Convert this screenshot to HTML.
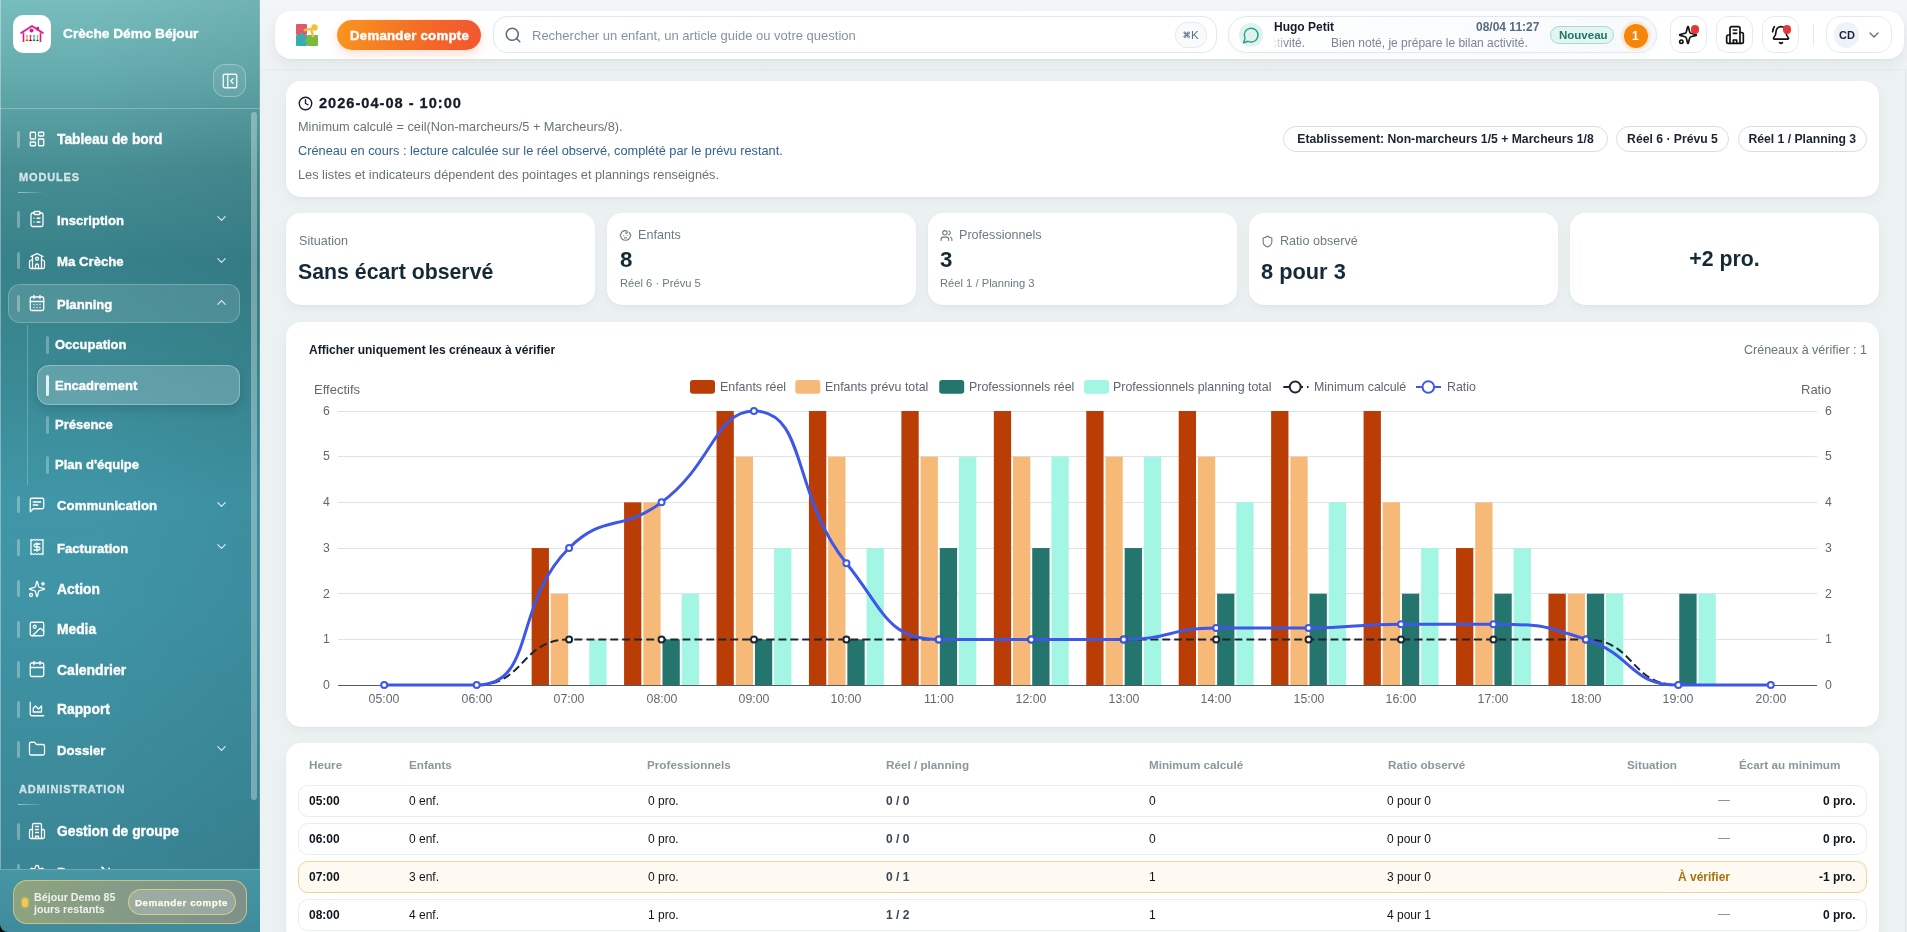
<!DOCTYPE html><html><head><meta charset="utf-8"><style>
html,body{margin:0;padding:0;width:1907px;height:932px;overflow:hidden;position:relative;font-family:"Liberation Sans",sans-serif;}
.t{position:absolute;white-space:nowrap;line-height:1;will-change:transform;}
</style></head><body>
<div style="position:absolute;left:260px;top:0px;width:1647px;height:932px;background:#ecf1f2;"></div>
<div style="position:absolute;left:260px;top:0px;width:1647px;height:70px;background:linear-gradient(#f3f6f7,#eef2f3);"></div>
<div style="position:absolute;left:260px;top:69px;width:1647px;height:2px;background:linear-gradient(rgba(0,0,0,0.035),rgba(0,0,0,0));"></div>
<div style="position:absolute;left:1905px;top:70px;width:1px;height:862px;background:#dfe4e6;"></div>
<div style="position:absolute;left:0px;top:0px;width:260px;height:932px;background:linear-gradient(90deg,rgba(0,20,30,0) 35%,rgba(0,20,30,0.06) 100%),linear-gradient(180deg,#78bdbd 0px,#66adaf 70px,#468d92 170px,#37818a 260px,#38868f 340px,#3c8e9b 420px,#4096a7 500px,#3f94a6 600px,#3d8f9f 710px,#3a8696 860px);"></div>
<div style="position:absolute;left:0px;top:0px;width:1px;height:932px;background:rgba(255,255,255,0.35);"></div>
<div style="position:absolute;left:259px;top:0px;width:1px;height:932px;background:rgba(255,255,255,0.12);"></div>
<div style="position:absolute;left:13px;top:15px;width:38px;height:38px;background:#fff;border-radius:10px;"></div>
<svg style="position:absolute;left:19px;top:24px" width="26" height="20" viewBox="0 0 26 20">
<path d="M2 9 L13 2 L24 9" fill="none" stroke="#e4148c" stroke-width="1.6" stroke-linecap="round"/>
<rect x="17.5" y="3" width="2.5" height="3.5" fill="#e4148c"/>
<circle cx="12.5" cy="6.5" r="2" fill="#e4148c"/>
<path d="M4.5 8.5 V18 M21.5 8.5 V18" stroke="#e4148c" stroke-width="1.6"/>
<circle cx="8" cy="12" r="1" fill="#f7941d"/><path d="M8 13 v3 M6.8 17 L8 15 L9.2 17" stroke="#f7941d" stroke-width="1"/>
<circle cx="11.5" cy="12" r="1" fill="#ec1c7c"/><path d="M11.5 13 v3 M10.3 17 L11.5 15 L12.7 17" stroke="#ec1c7c" stroke-width="1"/>
<circle cx="15" cy="12" r="1" fill="#29abe2"/><path d="M15 13 v3 M13.8 17 L15 15 L16.2 17" stroke="#29abe2" stroke-width="1"/>
<circle cx="18.5" cy="12" r="1" fill="#8dc63f"/><path d="M18.5 13 v3 M17.3 17 L18.5 15 L19.7 17" stroke="#8dc63f" stroke-width="1"/>
</svg>
<div class="t" style="left:62.50px;top:27.20px;font-size:13.7px;font-weight:700;color:#fff;-webkit-text-stroke:0.35px #fff;">Crèche Démo Béjour</div>
<div style="position:absolute;left:213px;top:64px;width:33px;height:33px;box-sizing:border-box;border:1px solid rgba(255,255,255,0.28);background:rgba(255,255,255,0.08);border-radius:12px;"></div>
<svg style="position:absolute;left:220.5px;top:71.5px;" width="18" height="18" viewBox="0 0 24 24" fill="none" stroke="rgba(255,255,255,0.92)" stroke-width="1.8" stroke-linecap="round" stroke-linejoin="round"><rect width="18" height="18" x="3" y="3" rx="2"/><path d="M9 3v18"/><path d="m16 15-3-3 3-3"/></svg>
<div style="position:absolute;left:0px;top:108px;width:260px;height:1px;background:rgba(255,255,255,0.28);"></div>
<div style="position:absolute;left:251px;top:112px;width:6px;height:688px;background:rgba(255,255,255,0.32);border-radius:3px;"></div>
<div style="position:absolute;left:17px;top:131px;width:3px;height:17px;background:rgba(255,255,255,0.3);border-radius:2px;"></div>
<svg style="position:absolute;left:28px;top:129.9px;" width="18" height="18" viewBox="0 0 24 24" fill="none" stroke="#fff" stroke-width="1.7" stroke-linecap="round" stroke-linejoin="round"><rect width="7" height="9" x="3" y="3" rx="1"/><rect width="7" height="5" x="14" y="3" rx="1"/><rect width="7" height="9" x="14" y="12" rx="1"/><rect width="7" height="5" x="3" y="16" rx="1"/></svg>
<div class="t" style="left:57.20px;top:133.32px;font-size:13.8px;font-weight:700;color:#fff;-webkit-text-stroke:0.35px #fff;">Tableau de bord</div>
<div class="t" style="left:18.50px;top:172.49px;font-size:11px;font-weight:700;color:rgba(255,255,255,0.72);letter-spacing:0.85px;-webkit-text-stroke:0.3px rgba(255,255,255,0.72);">MODULES</div>
<div style="position:absolute;left:18px;top:191.5px;width:26px;height:1px;background:linear-gradient(90deg,rgba(255,255,255,0.5),rgba(255,255,255,0));"></div>
<div style="position:absolute;left:17px;top:211px;width:3px;height:17px;background:rgba(255,255,255,0.3);border-radius:2px;"></div>
<svg style="position:absolute;left:28px;top:209.8px;" width="18" height="18" viewBox="0 0 24 24" fill="none" stroke="#fff" stroke-width="1.7" stroke-linecap="round" stroke-linejoin="round"><rect width="8" height="4" x="8" y="2" rx="1" ry="1"/><path d="M16 4h2a2 2 0 0 1 2 2v14a2 2 0 0 1-2 2H6a2 2 0 0 1-2-2V6a2 2 0 0 1 2-2h2"/><path d="M12 11h4"/><path d="M12 16h4"/><path d="M8 11h.01"/><path d="M8 16h.01"/></svg>
<div class="t" style="left:57.20px;top:213.81px;font-size:13.1px;font-weight:700;color:#fff;-webkit-text-stroke:0.35px #fff;">Inscription</div>
<svg style="position:absolute;left:213.5px;top:210.8px;" width="15" height="15" viewBox="0 0 24 24" fill="none" stroke="rgba(255,255,255,0.85)" stroke-width="1.8" stroke-linecap="round" stroke-linejoin="round"><path d="m6 9 6 6 6-6"/></svg>
<div style="position:absolute;left:17px;top:252px;width:3px;height:17px;background:rgba(255,255,255,0.3);border-radius:2px;"></div>
<svg style="position:absolute;left:28px;top:251.5px;" width="18" height="18" viewBox="0 0 24 24" fill="none" stroke="#fff" stroke-width="1.7" stroke-linecap="round" stroke-linejoin="round"><path d="M14 22v-4a2 2 0 1 0-4 0v4"/><path d="m18 10 3.447 1.724a1 1 0 0 1 .553.894V20a2 2 0 0 1-2 2H4a2 2 0 0 1-2-2v-7.382a1 1 0 0 1 .553-.894L6 10"/><path d="M18 5v17"/><path d="m4 6 7.106-3.553a2 2 0 0 1 1.788 0L20 6"/><path d="M6 5v17"/><circle cx="12" cy="9" r="2"/></svg>
<div class="t" style="left:57.20px;top:255.43px;font-size:13.2px;font-weight:700;color:#fff;-webkit-text-stroke:0.35px #fff;">Ma Crèche</div>
<svg style="position:absolute;left:213.5px;top:252.5px;" width="15" height="15" viewBox="0 0 24 24" fill="none" stroke="rgba(255,255,255,0.85)" stroke-width="1.8" stroke-linecap="round" stroke-linejoin="round"><path d="m6 9 6 6 6-6"/></svg>
<div style="position:absolute;left:8px;top:283.5px;width:232px;height:39.5px;box-sizing:border-box;border:1px solid rgba(255,255,255,0.22);background:rgba(255,255,255,0.12);border-radius:12px;"></div>
<div style="position:absolute;left:17px;top:295px;width:3px;height:17px;background:rgba(255,255,255,0.3);border-radius:2px;"></div>
<svg style="position:absolute;left:28px;top:293.7px;" width="18" height="18" viewBox="0 0 24 24" fill="none" stroke="#fff" stroke-width="1.7" stroke-linecap="round" stroke-linejoin="round"><path d="M8 2v4"/><path d="M16 2v4"/><rect width="18" height="18" x="3" y="4" rx="2"/><path d="M3 10h18"/><path d="M8 14h.01"/><path d="M12 14h.01"/><path d="M16 14h.01"/><path d="M8 18h.01"/><path d="M12 18h.01"/><path d="M16 18h.01"/></svg>
<div class="t" style="left:57.20px;top:297.71px;font-size:13.1px;font-weight:700;color:#fff;-webkit-text-stroke:0.35px #fff;">Planning</div>
<svg style="position:absolute;left:213.5px;top:294.7px;" width="15" height="15" viewBox="0 0 24 24" fill="none" stroke="rgba(255,255,255,0.85)" stroke-width="1.8" stroke-linecap="round" stroke-linejoin="round"><path d="m18 15-6-6-6 6"/></svg>
<div style="position:absolute;left:26.5px;top:325px;width:1px;height:160px;background:rgba(255,255,255,0.22);"></div>
<div style="position:absolute;left:46px;top:336px;width:3px;height:17.5px;background:rgba(255,255,255,0.28);border-radius:2px;"></div>
<div class="t" style="left:54.50px;top:338.00px;font-size:13.0px;font-weight:700;color:#fff;-webkit-text-stroke:0.35px #fff;">Occupation</div>
<div style="position:absolute;left:37px;top:365.3px;width:203px;height:39.5px;box-sizing:border-box;border:1px solid rgba(255,255,255,0.3);background:rgba(255,255,255,0.2);border-radius:12px;box-shadow:0 4px 10px rgba(0,40,50,0.18);"></div>
<div style="position:absolute;left:46px;top:374.5px;width:3px;height:21px;background:rgba(255,255,255,0.85);border-radius:2px;"></div>
<div class="t" style="left:54.50px;top:378.60px;font-size:13.0px;font-weight:700;color:#fff;-webkit-text-stroke:0.35px #fff;">Encadrement</div>
<div style="position:absolute;left:46px;top:416px;width:3px;height:17.5px;background:rgba(255,255,255,0.28);border-radius:2px;"></div>
<div class="t" style="left:54.50px;top:418.20px;font-size:13.0px;font-weight:700;color:#fff;-webkit-text-stroke:0.35px #fff;">Présence</div>
<div style="position:absolute;left:46px;top:456px;width:3px;height:17.5px;background:rgba(255,255,255,0.28);border-radius:2px;"></div>
<div class="t" style="left:54.50px;top:458.20px;font-size:13.0px;font-weight:700;color:#fff;-webkit-text-stroke:0.35px #fff;">Plan d'équipe</div>
<div style="position:absolute;left:17px;top:496px;width:3px;height:17px;background:rgba(255,255,255,0.3);border-radius:2px;"></div>
<svg style="position:absolute;left:28px;top:495.5px;" width="18" height="18" viewBox="0 0 24 24" fill="none" stroke="#fff" stroke-width="1.7" stroke-linecap="round" stroke-linejoin="round"><path d="M21 15a2 2 0 0 1-2 2H7l-4 4V5a2 2 0 0 1 2-2h14a2 2 0 0 1 2 2z"/><path d="M17 8H7"/><path d="M13 12H7"/></svg>
<div class="t" style="left:57.20px;top:499.38px;font-size:13.25px;font-weight:700;color:#fff;-webkit-text-stroke:0.35px #fff;">Communication</div>
<svg style="position:absolute;left:213.5px;top:496.5px;" width="15" height="15" viewBox="0 0 24 24" fill="none" stroke="rgba(255,255,255,0.85)" stroke-width="1.8" stroke-linecap="round" stroke-linejoin="round"><path d="m6 9 6 6 6-6"/></svg>
<div style="position:absolute;left:17px;top:539px;width:3px;height:17px;background:rgba(255,255,255,0.3);border-radius:2px;"></div>
<svg style="position:absolute;left:28px;top:537.6px;" width="18" height="18" viewBox="0 0 24 24" fill="none" stroke="#fff" stroke-width="1.7" stroke-linecap="round" stroke-linejoin="round"><path d="M4 2v20l2-1 2 1 2-1 2 1 2-1 2 1 2-1 2 1V2l-2 1-2-1-2 1-2-1-2 1-2-1-2 1Z"/><path d="M16 8h-6a2 2 0 1 0 0 4h4a2 2 0 1 1 0 4H8"/><path d="M12 17.5v-11"/></svg>
<div class="t" style="left:57.20px;top:541.61px;font-size:13.1px;font-weight:700;color:#fff;-webkit-text-stroke:0.35px #fff;">Facturation</div>
<svg style="position:absolute;left:213.5px;top:538.6px;" width="15" height="15" viewBox="0 0 24 24" fill="none" stroke="rgba(255,255,255,0.85)" stroke-width="1.8" stroke-linecap="round" stroke-linejoin="round"><path d="m6 9 6 6 6-6"/></svg>
<div style="position:absolute;left:17px;top:580px;width:3px;height:17px;background:rgba(255,255,255,0.3);border-radius:2px;"></div>
<svg style="position:absolute;left:28px;top:579.5px;" width="18" height="18" viewBox="0 0 24 24" fill="none" stroke="#fff" stroke-width="1.7" stroke-linecap="round" stroke-linejoin="round"><path d="M9.937 15.5A2 2 0 0 0 8.5 14.063l-6.135-1.582a.5.5 0 0 1 0-.962L8.5 9.936A2 2 0 0 0 9.937 8.5l1.582-6.135a.5.5 0 0 1 .963 0L14.063 8.5A2 2 0 0 0 15.5 9.937l6.135 1.581a.5.5 0 0 1 0 .964L15.5 14.063a2 2 0 0 0-1.437 1.437l-1.582 6.135a.5.5 0 0 1-.963 0z"/><path d="M20 3v4"/><path d="M22 5h-4"/><circle cx="4" cy="20" r="2"/></svg>
<div class="t" style="left:57.20px;top:582.92px;font-size:13.8px;font-weight:700;color:#fff;-webkit-text-stroke:0.35px #fff;">Action</div>
<div style="position:absolute;left:17px;top:621px;width:3px;height:17px;background:rgba(255,255,255,0.3);border-radius:2px;"></div>
<svg style="position:absolute;left:28px;top:619.7px;" width="18" height="18" viewBox="0 0 24 24" fill="none" stroke="#fff" stroke-width="1.7" stroke-linecap="round" stroke-linejoin="round"><rect width="18" height="18" x="3" y="3" rx="2" ry="2"/><circle cx="9" cy="9" r="2"/><path d="m21 15-3.086-3.086a2 2 0 0 0-2.828 0L6 21"/></svg>
<div class="t" style="left:57.20px;top:623.12px;font-size:13.8px;font-weight:700;color:#fff;-webkit-text-stroke:0.35px #fff;">Media</div>
<div style="position:absolute;left:17px;top:661px;width:3px;height:17px;background:rgba(255,255,255,0.3);border-radius:2px;"></div>
<svg style="position:absolute;left:28px;top:659.9px;" width="18" height="18" viewBox="0 0 24 24" fill="none" stroke="#fff" stroke-width="1.7" stroke-linecap="round" stroke-linejoin="round"><path d="M8 2v4"/><path d="M16 2v4"/><rect width="18" height="18" x="3" y="4" rx="2"/><path d="M3 10h18"/></svg>
<div class="t" style="left:57.20px;top:663.15px;font-size:14.0px;font-weight:700;color:#fff;-webkit-text-stroke:0.35px #fff;">Calendrier</div>
<div style="position:absolute;left:17px;top:701px;width:3px;height:17px;background:rgba(255,255,255,0.3);border-radius:2px;"></div>
<svg style="position:absolute;left:28px;top:699.9px;" width="18" height="18" viewBox="0 0 24 24" fill="none" stroke="#fff" stroke-width="1.7" stroke-linecap="round" stroke-linejoin="round"><path d="M3 3v16a2 2 0 0 0 2 2h16"/><path d="M7 16V11l3-3 4 4 4-4v8z"/></svg>
<div class="t" style="left:57.20px;top:703.32px;font-size:13.8px;font-weight:700;color:#fff;-webkit-text-stroke:0.35px #fff;">Rapport</div>
<div style="position:absolute;left:17px;top:741px;width:3px;height:17px;background:rgba(255,255,255,0.3);border-radius:2px;"></div>
<svg style="position:absolute;left:28px;top:739.8px;" width="18" height="18" viewBox="0 0 24 24" fill="none" stroke="#fff" stroke-width="1.7" stroke-linecap="round" stroke-linejoin="round"><path d="M20 20a2 2 0 0 0 2-2V8a2 2 0 0 0-2-2h-7.9a2 2 0 0 1-1.69-.9L9.6 3.9A2 2 0 0 0 7.93 3H4a2 2 0 0 0-2 2v13a2 2 0 0 0 2 2Z"/></svg>
<div class="t" style="left:57.20px;top:743.73px;font-size:13.2px;font-weight:700;color:#fff;-webkit-text-stroke:0.35px #fff;">Dossier</div>
<svg style="position:absolute;left:213.5px;top:740.8px;" width="15" height="15" viewBox="0 0 24 24" fill="none" stroke="rgba(255,255,255,0.85)" stroke-width="1.8" stroke-linecap="round" stroke-linejoin="round"><path d="m6 9 6 6 6-6"/></svg>
<div class="t" style="left:18.50px;top:784.09px;font-size:11px;font-weight:700;color:rgba(255,255,255,0.72);letter-spacing:0.85px;-webkit-text-stroke:0.3px rgba(255,255,255,0.72);">ADMINISTRATION</div>
<div style="position:absolute;left:18px;top:803.5px;width:26px;height:1px;background:linear-gradient(90deg,rgba(255,255,255,0.5),rgba(255,255,255,0));"></div>
<div style="position:absolute;left:17px;top:823px;width:3px;height:17px;background:rgba(255,255,255,0.3);border-radius:2px;"></div>
<svg style="position:absolute;left:28px;top:821.7px;" width="18" height="18" viewBox="0 0 24 24" fill="none" stroke="#fff" stroke-width="1.7" stroke-linecap="round" stroke-linejoin="round"><path d="M10 22v-3h4v3"/><path d="M10 6h4"/><path d="M10 10h4"/><path d="M10 14h4"/><path d="M6 22V4a2 2 0 0 1 2-2h8a2 2 0 0 1 2 2v18"/><path d="M6 10H4a2 2 0 0 0-2 2v8a2 2 0 0 0 2 2h16a2 2 0 0 0 2-2v-8a2 2 0 0 0-2-2h-2"/></svg>
<div class="t" style="left:57.20px;top:825.12px;font-size:13.8px;font-weight:700;color:#fff;-webkit-text-stroke:0.35px #fff;">Gestion de groupe</div>
<div style="position:absolute;left:17px;top:864px;width:3px;height:17px;background:rgba(255,255,255,0.3);border-radius:2px;"></div>
<svg style="position:absolute;left:28px;top:863.5px;" width="18" height="18" viewBox="0 0 24 24" fill="none" stroke="#fff" stroke-width="1.7" stroke-linecap="round" stroke-linejoin="round"><path d="M12.22 2h-.44a2 2 0 0 0-2 2v.18a2 2 0 0 1-1 1.73l-.43.25a2 2 0 0 1-2 0l-.15-.08a2 2 0 0 0-2.73.73l-.22.38a2 2 0 0 0 .73 2.73l.15.1a2 2 0 0 1 1 1.72v.51a2 2 0 0 1-1 1.74l-.15.09a2 2 0 0 0-.73 2.73l.22.38a2 2 0 0 0 2.73.73l.15-.08a2 2 0 0 1 2 0l.43.25a2 2 0 0 1 1 1.73V20a2 2 0 0 0 2 2h.44a2 2 0 0 0 2-2v-.18a2 2 0 0 1 1-1.73l.43-.25a2 2 0 0 1 2 0l.15.08a2 2 0 0 0 2.73-.73l.22-.39a2 2 0 0 0-.73-2.73l-.15-.08a2 2 0 0 1-1-1.74v-.5a2 2 0 0 1 1-1.74l.15-.09a2 2 0 0 0 .73-2.73l-.22-.38a2 2 0 0 0-2.73-.73l-.15.08a2 2 0 0 1-2 0l-.43-.25a2 2 0 0 1-1-1.73V4a2 2 0 0 0-2-2z"/><circle cx="12" cy="12" r="3"/></svg>
<div class="t" style="left:57.20px;top:866.92px;font-size:13.8px;font-weight:700;color:#fff;-webkit-text-stroke:0.35px #fff;">Paramètres</div>
<div style="position:absolute;left:0px;top:869px;width:260px;height:63px;background:linear-gradient(180deg,#4796a4,#3f8b9c);border-top:1px solid rgba(255,255,255,0.25);"></div>
<div style="position:absolute;left:12.5px;top:880px;width:234.5px;height:44px;box-sizing:border-box;border:1px solid rgba(228,205,120,0.75);background:linear-gradient(100deg,#8ea47f 0%,#82998a 55%,#7d918a 100%);border-radius:14px;"></div>
<div style="position:absolute;left:22px;top:897.5px;width:6px;height:9.5px;background:#f4c94a;border-radius:3px;box-shadow:0 0 0 1.5px rgba(244,201,74,0.35);"></div>
<div class="t" style="left:34.00px;top:891.74px;font-size:10.7px;font-weight:700;color:rgba(255,255,255,0.86);">Béjour Demo 85</div>
<div class="t" style="left:34.00px;top:903.74px;font-size:10.7px;font-weight:700;color:rgba(255,255,255,0.86);">jours restants</div>
<div style="position:absolute;left:128px;top:889px;width:108px;height:26px;box-sizing:border-box;border:1px solid rgba(230,210,130,0.8);background:rgba(255,255,255,0.2);border-radius:13px;"></div>
<div class="t" style="left:134.60px;top:898.00px;font-size:9.8px;font-weight:700;color:#fffbea;letter-spacing:0.5px;-webkit-text-stroke:0.25px #fffbea;">Demander compte</div>
<svg style="position:absolute;left:0;top:924px" width="8" height="8" viewBox="0 0 8 8"><path d="M0 0 V8 H8 A8 8 0 0 1 0 0 Z" fill="#120a08"/></svg>
<div style="position:absolute;left:275px;top:11px;width:1628.5px;height:48px;background:#fff;border-radius:16px;box-shadow:0 1px 2px rgba(20,40,50,0.04),0 6px 14px rgba(20,40,50,0.06);"></div>
<svg style="position:absolute;left:296px;top:24px" width="22" height="22" viewBox="0 0 22 22">
<rect x="0" y="0" width="11" height="11" rx="1" fill="#e05a68"/>
<rect x="0" y="11" width="11" height="11" rx="1" fill="#38adb0"/>
<rect x="11" y="11" width="11" height="11" rx="1" fill="#7cb93e"/>
<circle cx="5.5" cy="11" r="2" fill="#38adb0"/><circle cx="11" cy="16.5" r="2" fill="#7cb93e"/>
<circle cx="18.5" cy="3.5" r="3.2" fill="#f0c23d"/>
<path d="M9 6 L15 5 M15 5 L17 12" stroke="#f0c23d" stroke-width="2.6" stroke-linecap="round"/>
</svg>
<div style="position:absolute;left:337px;top:20px;width:143.5px;height:30px;background:linear-gradient(100deg,#f8961d,#f46a27 60%,#f2562f);border-radius:15px;box-shadow:0 4px 10px rgba(244,100,40,0.22);"></div>
<div class="t" style="left:350.40px;top:28.74px;font-size:13.3px;font-weight:700;color:#fff;letter-spacing:0.2px;-webkit-text-stroke:0.4px #fff;">Demander compte</div>
<div style="position:absolute;left:493px;top:16.2px;width:724px;height:37.3px;box-sizing:border-box;border:1px solid #e0eaec;background:#fff;border-radius:14px;"></div>
<svg style="position:absolute;left:504.1px;top:25.9px;" width="18" height="18" viewBox="0 0 24 24" fill="none" stroke="#5a6a80" stroke-width="2" stroke-linecap="round" stroke-linejoin="round"><circle cx="11" cy="11" r="8"/><path d="m21 21-4.3-4.3"/></svg>
<div class="t" style="left:531.80px;top:28.70px;font-size:13px;font-weight:400;color:#8492a8;">Rechercher un enfant, un article guide ou votre question</div>
<div style="position:absolute;left:1175px;top:22px;width:32px;height:26px;box-sizing:border-box;border:1px solid #e3ebee;background:#f8fafc;border-radius:12px;"></div>
<svg style="position:absolute;left:1183px;top:30.5px" width="7.5" height="7.5" viewBox="0 0 24 24" fill="none" stroke="#60708a" stroke-width="3.2" stroke-linecap="round" stroke-linejoin="round"><path d="M15 6v12a3 3 0 1 0 3-3H6a3 3 0 1 0 3 3V6a3 3 0 1 0-3 3h12a3 3 0 1 0-3-3"/></svg>
<div class="t" style="left:1190.50px;top:29.87px;font-size:11.5px;font-weight:400;color:#60708a;">K</div>
<div style="position:absolute;left:1228.2px;top:16.2px;width:429.3px;height:37.3px;box-sizing:border-box;border:1px solid #e1e9ec;background:linear-gradient(90deg,#fff,#f6f9fb);border-radius:18.5px;box-shadow:0 2px 6px rgba(20,40,50,0.04);"></div>
<div style="position:absolute;left:1239px;top:23px;width:24px;height:24px;background:#def3ee;border-radius:12px;"></div>
<svg style="position:absolute;left:1242.2px;top:25.8px;" width="18.3" height="18.3" viewBox="0 0 24 24" fill="none" stroke="#2a9d8a" stroke-width="1.8" stroke-linecap="round" stroke-linejoin="round"><path d="M7.9 20A9 9 0 1 0 4 16.1L2 22Z"/></svg>
<div class="t" style="left:1273.50px;top:21.34px;font-size:12px;font-weight:700;color:#141c2c;">Hugo Petit</div>
<div class="t" style="right:367.70px;top:21.34px;font-size:12px;font-weight:700;color:#5a6a85;">08/04 11:27</div>
<div style="position:absolute;left:1273px;top:37px;width:260px;height:14px;overflow:hidden;">
<div class="t" style="left:-2px;top:0.4px;font-size:12px;color:#7a8597;">ctivité.</div>
<div class="t" style="left:58.4px;top:0.4px;font-size:12px;color:#7a8597;">Bien noté, je prépare le bilan activité.</div>
<div style="position:absolute;left:0;top:0;width:14px;height:14px;background:linear-gradient(90deg,#fcfdfd,rgba(252,253,253,0));"></div>
</div>
<div style="position:absolute;left:1550px;top:26.3px;width:64px;height:17.5px;box-sizing:border-box;border:1px solid #a5dccf;background:#e3f5f1;border-radius:9px;"></div>
<div class="t" style="left:1558.50px;top:30.37px;font-size:11.5px;font-weight:700;color:#1f7568;">Nouveau</div>
<div style="position:absolute;left:1620.5px;top:20.5px;width:30px;height:30px;background:#fde9d3;border-radius:15px;"></div>
<div style="position:absolute;left:1623.5px;top:23.5px;width:24px;height:24px;background:#f5860a;border-radius:12px;"></div>
<div class="t" style="left:1631.70px;top:29.94px;font-size:12px;font-weight:700;color:#fff;">1</div>
<div style="position:absolute;left:1670px;top:16.3px;width:37px;height:37px;box-sizing:border-box;border:1px solid #e3ebee;background:#fff;border-radius:12px;"></div>
<div style="position:absolute;left:1716.3px;top:16.3px;width:37px;height:37px;box-sizing:border-box;border:1px solid #e3ebee;background:#fff;border-radius:12px;"></div>
<div style="position:absolute;left:1762.3px;top:16.3px;width:37px;height:37px;box-sizing:border-box;border:1px solid #e3ebee;background:#fff;border-radius:12px;"></div>
<svg style="position:absolute;left:1678px;top:25px;" width="20" height="20" viewBox="0 0 24 24" fill="none" stroke="#111" stroke-width="2" stroke-linecap="round" stroke-linejoin="round"><path d="M9.937 15.5A2 2 0 0 0 8.5 14.063l-6.135-1.582a.5.5 0 0 1 0-.962L8.5 9.936A2 2 0 0 0 9.937 8.5l1.582-6.135a.5.5 0 0 1 .963 0L14.063 8.5A2 2 0 0 0 15.5 9.937l6.135 1.581a.5.5 0 0 1 0 .964L15.5 14.063a2 2 0 0 0-1.437 1.437l-1.582 6.135a.5.5 0 0 1-.963 0z"/><path d="M20 3v4"/><path d="M22 5h-4"/><circle cx="4" cy="20" r="2"/></svg>
<div style="position:absolute;left:1690.7px;top:25px;width:8.5px;height:8.5px;background:#e5383b;border-radius:5px;border:0px solid #fff;"></div>
<svg style="position:absolute;left:1725px;top:25.2px;" width="20" height="20" viewBox="0 0 24 24" fill="none" stroke="#111" stroke-width="2" stroke-linecap="round" stroke-linejoin="round"><path d="M6 22V4a2 2 0 0 1 2-2h8a2 2 0 0 1 2 2v18Z"/><path d="M6 12H4a2 2 0 0 0-2 2v6a2 2 0 0 0 2 2h2"/><path d="M18 9h2a2 2 0 0 1 2 2v9a2 2 0 0 1-2 2h-2"/><path d="M10 6h4"/><path d="M10 10h4"/><path d="M10 22v-4h4v4"/></svg>
<svg style="position:absolute;left:1771px;top:25px;" width="20" height="20" viewBox="0 0 24 24" fill="none" stroke="#111" stroke-width="2" stroke-linecap="round" stroke-linejoin="round"><path d="M10.268 21a2 2 0 0 0 3.464 0"/><path d="M22 8c0-2.3-.8-4.3-2-6"/><path d="M3.262 15.326A1 1 0 0 0 4 17h16a1 1 0 0 0 .74-1.673C19.41 13.956 18 12.499 18 8A6 6 0 0 0 6 8c0 4.499-1.411 5.956-2.738 7.326"/><path d="M4 2C2.8 3.7 2 5.7 2 8"/></svg>
<div style="position:absolute;left:1782.7px;top:25px;width:8.5px;height:8.5px;background:#e5383b;border-radius:5px;"></div>
<div style="position:absolute;left:1812.5px;top:24px;width:1px;height:21.5px;background:#e3e9ec;"></div>
<div style="position:absolute;left:1825.8px;top:16.3px;width:66.7px;height:37px;box-sizing:border-box;border:1px solid #e3ebee;background:#fff;border-radius:14px;"></div>
<div style="position:absolute;left:1834.2px;top:22.3px;width:25.3px;height:25.3px;background:#eef3fa;border-radius:12.6px;"></div>
<div class="t" style="left:1839.20px;top:30.29px;font-size:11px;font-weight:700;color:#1a2233;">CD</div>
<svg style="position:absolute;left:1866px;top:26.5px;" width="16" height="16" viewBox="0 0 24 24" fill="none" stroke="#5a6a85" stroke-width="1.8" stroke-linecap="round" stroke-linejoin="round"><path d="m6 9 6 6 6-6"/></svg>
<div style="position:absolute;left:286px;top:81px;width:1593px;height:116px;background:#fff;border-radius:15px;box-shadow:0 1px 2px rgba(20,40,50,0.03),0 4px 14px rgba(20,40,50,0.045);"></div>
<svg style="position:absolute;left:297.5px;top:95.5px;" width="15" height="15" viewBox="0 0 24 24" fill="none" stroke="#151c28" stroke-width="2.2" stroke-linecap="round" stroke-linejoin="round"><circle cx="12" cy="12" r="10"/><polyline points="12 6 12 12 16 14"/></svg>
<div class="t" style="left:318.90px;top:96.34px;font-size:14.6px;font-weight:700;color:#151c28;letter-spacing:1.0px;-webkit-text-stroke:0.3px #151c28;">2026-04-08 - 10:00</div>
<div class="t" style="left:298.00px;top:120.71px;font-size:12.75px;font-weight:400;color:#67737a;">Minimum calculé = ceil(Non-marcheurs/5 + Marcheurs/8).</div>
<div class="t" style="left:298.00px;top:144.81px;font-size:12.75px;font-weight:400;color:#33628f;">Créneau en cours : lecture calculée sur le réel observé, complété par le prévu restant.</div>
<div class="t" style="left:298.00px;top:169.01px;font-size:12.75px;font-weight:400;color:#67737a;">Les listes et indicateurs dépendent des pointages et plannings renseignés.</div>
<div style="position:absolute;left:1283px;top:126px;width:325px;height:26px;box-sizing:border-box;border:1px solid #d9dee2;border-radius:13px;"></div>
<div class="t" style="left:1283px;width:325px;text-align:center;top:132.87px;font-size:12.2px;font-weight:700;color:#1b2230;">Etablissement: Non-marcheurs 1/5 + Marcheurs 1/8</div>
<div style="position:absolute;left:1616.3px;top:126px;width:113px;height:26px;box-sizing:border-box;border:1px solid #d9dee2;border-radius:13px;"></div>
<div class="t" style="left:1616.3px;width:113px;text-align:center;top:132.87px;font-size:12.2px;font-weight:700;color:#1b2230;">Réel 6 · Prévu 5</div>
<div style="position:absolute;left:1738.4px;top:126px;width:128.5px;height:26px;box-sizing:border-box;border:1px solid #d9dee2;border-radius:13px;"></div>
<div class="t" style="left:1738.4px;width:128.5px;text-align:center;top:132.87px;font-size:12.2px;font-weight:700;color:#1b2230;">Réel 1 / Planning 3</div>
<div style="position:absolute;left:286px;top:213px;width:309px;height:92px;background:#fff;border-radius:15px;box-shadow:0 1px 2px rgba(20,40,50,0.03),0 4px 14px rgba(20,40,50,0.045);"></div>
<div style="position:absolute;left:606.6px;top:213px;width:309px;height:92px;background:#fff;border-radius:15px;box-shadow:0 1px 2px rgba(20,40,50,0.03),0 4px 14px rgba(20,40,50,0.045);"></div>
<div style="position:absolute;left:927.8px;top:213px;width:309px;height:92px;background:#fff;border-radius:15px;box-shadow:0 1px 2px rgba(20,40,50,0.03),0 4px 14px rgba(20,40,50,0.045);"></div>
<div style="position:absolute;left:1248.7px;top:213px;width:309px;height:92px;background:#fff;border-radius:15px;box-shadow:0 1px 2px rgba(20,40,50,0.03),0 4px 14px rgba(20,40,50,0.045);"></div>
<div style="position:absolute;left:1569.6px;top:213px;width:309px;height:92px;background:#fff;border-radius:15px;box-shadow:0 1px 2px rgba(20,40,50,0.03),0 4px 14px rgba(20,40,50,0.045);"></div>
<div class="t" style="left:298.70px;top:234.93px;font-size:12.6px;font-weight:400;color:#6c7a82;">Situation</div>
<div class="t" style="left:298.30px;top:261.57px;font-size:21.3px;font-weight:700;color:#152a36;">Sans écart observé</div>
<svg style="position:absolute;left:618.8px;top:229.3px;" width="13" height="13" viewBox="0 0 24 24" fill="none" stroke="#6c7a82" stroke-width="2" stroke-linecap="round" stroke-linejoin="round"><path d="M9 12h.01"/><path d="M15 12h.01"/><path d="M10 16c.5.3 1.2.5 2 .5s1.5-.2 2-.5"/><path d="M19 6.3a9 9 0 0 1 1.8 3.9 2 2 0 0 1 0 3.6 9 9 0 0 1-17.6 0 2 2 0 0 1 0-3.6A9 9 0 0 1 12 3c2 0 3.5 1.1 3.5 2.5s-.9 2.5-2 2.5c-.8 0-1.5-.4-1.5-1"/></svg>
<div class="t" style="left:637.60px;top:229.03px;font-size:12.6px;font-weight:400;color:#6c7a82;">Enfants</div>
<div class="t" style="left:619.50px;top:248.72px;font-size:22.3px;font-weight:700;color:#152a36;">8</div>
<div class="t" style="left:619.60px;top:278.12px;font-size:11.2px;font-weight:400;color:#6c7a82;">Réel 6 · Prévu 5</div>
<svg style="position:absolute;left:939.8px;top:229.3px;" width="13" height="13" viewBox="0 0 24 24" fill="none" stroke="#6c7a82" stroke-width="2" stroke-linecap="round" stroke-linejoin="round"><path d="M16 21v-2a4 4 0 0 0-4-4H6a4 4 0 0 0-4 4v2"/><circle cx="9" cy="7" r="4"/><path d="M22 21v-2a4 4 0 0 0-3-3.87"/><path d="M16 3.13a4 4 0 0 1 0 7.75"/></svg>
<div class="t" style="left:958.50px;top:229.03px;font-size:12.6px;font-weight:400;color:#6c7a82;">Professionnels</div>
<div class="t" style="left:940.20px;top:248.72px;font-size:22.3px;font-weight:700;color:#152a36;">3</div>
<div class="t" style="left:940.40px;top:278.12px;font-size:11.2px;font-weight:400;color:#6c7a82;">Réel 1 / Planning 3</div>
<svg style="position:absolute;left:1260.8px;top:235.3px;" width="13" height="13" viewBox="0 0 24 24" fill="none" stroke="#6c7a82" stroke-width="2" stroke-linecap="round" stroke-linejoin="round"><path d="M20 13c0 5-3.5 7.5-7.66 8.95a1 1 0 0 1-.67-.01C7.5 20.5 4 18 4 13V6a1 1 0 0 1 1-1c2 0 4.5-1.2 6.24-2.72a1.17 1.17 0 0 1 1.52 0C14.51 3.81 17 5 19 5a1 1 0 0 1 1 1z"/></svg>
<div class="t" style="left:1279.50px;top:234.93px;font-size:12.6px;font-weight:400;color:#6c7a82;">Ratio observé</div>
<div class="t" style="left:1261.00px;top:261.15px;font-size:21.8px;font-weight:700;color:#152a36;">8 pour 3</div>
<div class="t" style="left:1569.6px;width:309px;text-align:center;top:248.77px;font-size:21.3px;font-weight:700;color:#152a36;">+2 pro.</div>
<div style="position:absolute;left:286px;top:322px;width:1593px;height:405px;background:#fff;border-radius:15px;box-shadow:0 1px 2px rgba(20,40,50,0.03),0 4px 14px rgba(20,40,50,0.045);"></div>
<div class="t" style="left:309.00px;top:343.64px;font-size:12px;font-weight:700;color:#141c28;">Afficher uniquement les créneaux à vérifier</div>
<div class="t" style="right:40.20px;top:343.92px;font-size:12.5px;font-weight:400;color:#67737a;">Créneaux à vérifier : 1</div>
<svg style="position:absolute;left:0;top:0" width="1907" height="932" viewBox="0 0 1907 932"><line x1="338.0" y1="639.5" x2="1817.0" y2="639.5" stroke="#dfe2ea" stroke-width="1"/><line x1="338.0" y1="593.5" x2="1817.0" y2="593.5" stroke="#dfe2ea" stroke-width="1"/><line x1="338.0" y1="548.5" x2="1817.0" y2="548.5" stroke="#dfe2ea" stroke-width="1"/><line x1="338.0" y1="502.5" x2="1817.0" y2="502.5" stroke="#dfe2ea" stroke-width="1"/><line x1="338.0" y1="456.5" x2="1817.0" y2="456.5" stroke="#dfe2ea" stroke-width="1"/><line x1="338.0" y1="411.5" x2="1817.0" y2="411.5" stroke="#dfe2ea" stroke-width="1"/><rect x="531.64" y="548.05" width="17.30" height="137.05" fill="#bb3d06"/><rect x="550.84" y="593.73" width="17.30" height="91.37" fill="#f7b977"/><rect x="589.24" y="639.42" width="17.30" height="45.68" fill="#a3f5e4"/><rect x="624.08" y="502.37" width="17.30" height="182.73" fill="#bb3d06"/><rect x="643.28" y="502.37" width="17.30" height="182.73" fill="#f7b977"/><rect x="662.48" y="639.42" width="17.30" height="45.68" fill="#23756d"/><rect x="681.68" y="593.73" width="17.30" height="91.37" fill="#a3f5e4"/><rect x="716.52" y="411.00" width="17.30" height="274.10" fill="#bb3d06"/><rect x="735.72" y="456.68" width="17.30" height="228.42" fill="#f7b977"/><rect x="754.92" y="639.42" width="17.30" height="45.68" fill="#23756d"/><rect x="774.12" y="548.05" width="17.30" height="137.05" fill="#a3f5e4"/><rect x="808.96" y="411.00" width="17.30" height="274.10" fill="#bb3d06"/><rect x="828.16" y="456.68" width="17.30" height="228.42" fill="#f7b977"/><rect x="847.36" y="639.42" width="17.30" height="45.68" fill="#23756d"/><rect x="866.56" y="548.05" width="17.30" height="137.05" fill="#a3f5e4"/><rect x="901.39" y="411.00" width="17.30" height="274.10" fill="#bb3d06"/><rect x="920.59" y="456.68" width="17.30" height="228.42" fill="#f7b977"/><rect x="939.79" y="548.05" width="17.30" height="137.05" fill="#23756d"/><rect x="958.99" y="456.68" width="17.30" height="228.42" fill="#a3f5e4"/><rect x="993.83" y="411.00" width="17.30" height="274.10" fill="#bb3d06"/><rect x="1013.03" y="456.68" width="17.30" height="228.42" fill="#f7b977"/><rect x="1032.23" y="548.05" width="17.30" height="137.05" fill="#23756d"/><rect x="1051.43" y="456.68" width="17.30" height="228.42" fill="#a3f5e4"/><rect x="1086.27" y="411.00" width="17.30" height="274.10" fill="#bb3d06"/><rect x="1105.47" y="456.68" width="17.30" height="228.42" fill="#f7b977"/><rect x="1124.67" y="548.05" width="17.30" height="137.05" fill="#23756d"/><rect x="1143.87" y="456.68" width="17.30" height="228.42" fill="#a3f5e4"/><rect x="1178.71" y="411.00" width="17.30" height="274.10" fill="#bb3d06"/><rect x="1197.91" y="456.68" width="17.30" height="228.42" fill="#f7b977"/><rect x="1217.11" y="593.73" width="17.30" height="91.37" fill="#23756d"/><rect x="1236.31" y="502.37" width="17.30" height="182.73" fill="#a3f5e4"/><rect x="1271.14" y="411.00" width="17.30" height="274.10" fill="#bb3d06"/><rect x="1290.34" y="456.68" width="17.30" height="228.42" fill="#f7b977"/><rect x="1309.54" y="593.73" width="17.30" height="91.37" fill="#23756d"/><rect x="1328.74" y="502.37" width="17.30" height="182.73" fill="#a3f5e4"/><rect x="1363.58" y="411.00" width="17.30" height="274.10" fill="#bb3d06"/><rect x="1382.78" y="502.37" width="17.30" height="182.73" fill="#f7b977"/><rect x="1401.98" y="593.73" width="17.30" height="91.37" fill="#23756d"/><rect x="1421.18" y="548.05" width="17.30" height="137.05" fill="#a3f5e4"/><rect x="1456.02" y="548.05" width="17.30" height="137.05" fill="#bb3d06"/><rect x="1475.22" y="502.37" width="17.30" height="182.73" fill="#f7b977"/><rect x="1494.42" y="593.73" width="17.30" height="91.37" fill="#23756d"/><rect x="1513.62" y="548.05" width="17.30" height="137.05" fill="#a3f5e4"/><rect x="1548.46" y="593.73" width="17.30" height="91.37" fill="#bb3d06"/><rect x="1567.66" y="593.73" width="17.30" height="91.37" fill="#f7b977"/><rect x="1586.86" y="593.73" width="17.30" height="91.37" fill="#23756d"/><rect x="1606.06" y="593.73" width="17.30" height="91.37" fill="#a3f5e4"/><rect x="1679.29" y="593.73" width="17.30" height="91.37" fill="#23756d"/><rect x="1698.49" y="593.73" width="17.30" height="91.37" fill="#a3f5e4"/><line x1="338.0" y1="685.5" x2="1817.0" y2="685.5" stroke="#555b66" stroke-width="1"/><path d="M384.22,685.10 C384.22,685.10 432.96,685.10 476.66,685.10 C525.40,685.10 520.35,639.42 569.09,639.42 C612.79,639.42 615.31,639.42 661.53,639.42 C707.75,639.42 707.75,639.42 753.97,639.42 C800.19,639.42 800.19,639.42 846.41,639.42 C892.62,639.42 892.62,639.42 938.84,639.42 C985.06,639.42 985.06,639.42 1031.28,639.42 C1077.50,639.42 1077.50,639.42 1123.72,639.42 C1169.94,639.42 1169.94,639.42 1216.16,639.42 C1262.38,639.42 1262.38,639.42 1308.59,639.42 C1354.81,639.42 1354.81,639.42 1401.03,639.42 C1447.25,639.42 1447.25,639.42 1493.47,639.42 C1539.69,639.42 1542.21,639.42 1585.91,639.42 C1634.65,639.42 1629.60,685.10 1678.34,685.10 C1722.04,685.10 1770.78,685.10 1770.78,685.10" fill="none" stroke="#1e2632" stroke-width="2" stroke-dasharray="8 4" stroke-dashoffset="11.65"/><path d="M384.22,685.10 C384.22,685.10 443.50,685.10 476.66,685.10 C535.94,685.10 512.16,604.32 569.09,548.05 C604.60,512.95 620.64,532.68 661.53,502.37 C713.08,464.16 714.98,411.00 753.97,411.00 C807.41,411.00 791.13,494.98 846.41,563.28 C883.57,609.19 886.67,639.42 938.84,639.42 C979.11,639.42 985.06,639.42 1031.28,639.42 C1077.50,639.42 1077.68,639.42 1123.72,639.42 C1170.11,639.42 1169.76,628.00 1216.16,628.00 C1262.20,628.00 1262.39,628.00 1308.59,628.00 C1354.83,628.00 1354.79,624.19 1401.03,624.19 C1447.23,624.19 1447.56,624.19 1493.47,624.19 C1540.00,624.19 1541.90,624.92 1585.91,639.42 C1634.34,655.37 1629.60,685.10 1678.34,685.10 C1722.04,685.10 1770.78,685.10 1770.78,685.10" fill="none" stroke="#3d58e8" stroke-width="3"/><circle cx="569.09" cy="639.42" r="3" fill="#fff" stroke="#1e2632" stroke-width="2"/><circle cx="661.53" cy="639.42" r="3" fill="#fff" stroke="#1e2632" stroke-width="2"/><circle cx="753.97" cy="639.42" r="3" fill="#fff" stroke="#1e2632" stroke-width="2"/><circle cx="846.41" cy="639.42" r="3" fill="#fff" stroke="#1e2632" stroke-width="2"/><circle cx="938.84" cy="639.42" r="3" fill="#fff" stroke="#1e2632" stroke-width="2"/><circle cx="1031.28" cy="639.42" r="3" fill="#fff" stroke="#1e2632" stroke-width="2"/><circle cx="1123.72" cy="639.42" r="3" fill="#fff" stroke="#1e2632" stroke-width="2"/><circle cx="1216.16" cy="639.42" r="3" fill="#fff" stroke="#1e2632" stroke-width="2"/><circle cx="1308.59" cy="639.42" r="3" fill="#fff" stroke="#1e2632" stroke-width="2"/><circle cx="1401.03" cy="639.42" r="3" fill="#fff" stroke="#1e2632" stroke-width="2"/><circle cx="1493.47" cy="639.42" r="3" fill="#fff" stroke="#1e2632" stroke-width="2"/><circle cx="1585.91" cy="639.42" r="3" fill="#fff" stroke="#1e2632" stroke-width="2"/><circle cx="384.22" cy="685.10" r="3" fill="#fff" stroke="#3d58e8" stroke-width="2"/><circle cx="476.66" cy="685.10" r="3" fill="#fff" stroke="#3d58e8" stroke-width="2"/><circle cx="569.09" cy="548.05" r="3" fill="#fff" stroke="#3d58e8" stroke-width="2"/><circle cx="661.53" cy="502.37" r="3" fill="#fff" stroke="#3d58e8" stroke-width="2"/><circle cx="753.97" cy="411.00" r="3" fill="#fff" stroke="#3d58e8" stroke-width="2"/><circle cx="846.41" cy="563.28" r="3" fill="#fff" stroke="#3d58e8" stroke-width="2"/><circle cx="938.84" cy="639.42" r="3" fill="#fff" stroke="#3d58e8" stroke-width="2"/><circle cx="1031.28" cy="639.42" r="3" fill="#fff" stroke="#3d58e8" stroke-width="2"/><circle cx="1123.72" cy="639.42" r="3" fill="#fff" stroke="#3d58e8" stroke-width="2"/><circle cx="1216.16" cy="628.00" r="3" fill="#fff" stroke="#3d58e8" stroke-width="2"/><circle cx="1308.59" cy="628.00" r="3" fill="#fff" stroke="#3d58e8" stroke-width="2"/><circle cx="1401.03" cy="624.19" r="3" fill="#fff" stroke="#3d58e8" stroke-width="2"/><circle cx="1493.47" cy="624.19" r="3" fill="#fff" stroke="#3d58e8" stroke-width="2"/><circle cx="1585.91" cy="639.42" r="3" fill="#fff" stroke="#3d58e8" stroke-width="2"/><circle cx="1678.34" cy="685.10" r="3" fill="#fff" stroke="#3d58e8" stroke-width="2"/><circle cx="1770.78" cy="685.10" r="3" fill="#fff" stroke="#3d58e8" stroke-width="2"/><rect x="690" y="380" width="25" height="13.7" rx="3" fill="#bb3d06"/><rect x="795.3" y="380" width="25" height="13.7" rx="3" fill="#f7b977"/><rect x="939.2" y="380" width="25" height="13.7" rx="3" fill="#23756d"/><rect x="1084" y="380" width="25" height="13.7" rx="3" fill="#a3f5e4"/><line x1="1283.3" y1="387" x2="1303" y2="387" stroke="#1e2632" stroke-width="2"/><circle cx="1295.2" cy="387" r="5.5" fill="#fff" stroke="#1e2632" stroke-width="2"/><rect x="1307" y="386" width="1.5" height="2" fill="#1e2632"/><line x1="1416" y1="387" x2="1441" y2="387" stroke="#3d58e8" stroke-width="2"/><circle cx="1428.3" cy="387" r="5.8" fill="#fff" stroke="#3d58e8" stroke-width="2"/></svg>
<div class="t" style="left:720.00px;top:381.40px;font-size:12.4px;font-weight:400;color:#5f6670;">Enfants réel</div>
<div class="t" style="left:825.40px;top:381.40px;font-size:12.4px;font-weight:400;color:#5f6670;">Enfants prévu total</div>
<div class="t" style="left:969.20px;top:381.40px;font-size:12.4px;font-weight:400;color:#5f6670;">Professionnels réel</div>
<div class="t" style="left:1113.00px;top:381.40px;font-size:12.4px;font-weight:400;color:#5f6670;">Professionnels planning total</div>
<div class="t" style="left:1313.80px;top:381.40px;font-size:12.4px;font-weight:400;color:#5f6670;">Minimum calculé</div>
<div class="t" style="left:1446.50px;top:381.40px;font-size:12.4px;font-weight:400;color:#5f6670;">Ratio</div>
<div class="t" style="left:314.00px;top:383.10px;font-size:13px;font-weight:400;color:#62686f;">Effectifs</div>
<div class="t" style="right:75.80px;top:383.20px;font-size:13px;font-weight:400;color:#62686f;">Ratio</div>
<div class="t" style="right:1577.10px;top:678.89px;font-size:12.3px;font-weight:400;color:#62686f;">0</div>
<div class="t" style="left:1825.30px;top:678.89px;font-size:12.3px;font-weight:400;color:#62686f;">0</div>
<div class="t" style="right:1577.10px;top:633.20px;font-size:12.3px;font-weight:400;color:#62686f;">1</div>
<div class="t" style="left:1825.30px;top:633.20px;font-size:12.3px;font-weight:400;color:#62686f;">1</div>
<div class="t" style="right:1577.10px;top:587.52px;font-size:12.3px;font-weight:400;color:#62686f;">2</div>
<div class="t" style="left:1825.30px;top:587.52px;font-size:12.3px;font-weight:400;color:#62686f;">2</div>
<div class="t" style="right:1577.10px;top:541.84px;font-size:12.3px;font-weight:400;color:#62686f;">3</div>
<div class="t" style="left:1825.30px;top:541.84px;font-size:12.3px;font-weight:400;color:#62686f;">3</div>
<div class="t" style="right:1577.10px;top:496.15px;font-size:12.3px;font-weight:400;color:#62686f;">4</div>
<div class="t" style="left:1825.30px;top:496.15px;font-size:12.3px;font-weight:400;color:#62686f;">4</div>
<div class="t" style="right:1577.10px;top:450.47px;font-size:12.3px;font-weight:400;color:#62686f;">5</div>
<div class="t" style="left:1825.30px;top:450.47px;font-size:12.3px;font-weight:400;color:#62686f;">5</div>
<div class="t" style="right:1577.10px;top:404.79px;font-size:12.3px;font-weight:400;color:#62686f;">6</div>
<div class="t" style="left:1825.30px;top:404.79px;font-size:12.3px;font-weight:400;color:#62686f;">6</div>
<div class="t" style="left:354.22px;width:60px;text-align:center;top:692.89px;font-size:12.3px;color:#62686f;">05:00</div>
<div class="t" style="left:446.66px;width:60px;text-align:center;top:692.89px;font-size:12.3px;color:#62686f;">06:00</div>
<div class="t" style="left:539.09px;width:60px;text-align:center;top:692.89px;font-size:12.3px;color:#62686f;">07:00</div>
<div class="t" style="left:631.53px;width:60px;text-align:center;top:692.89px;font-size:12.3px;color:#62686f;">08:00</div>
<div class="t" style="left:723.97px;width:60px;text-align:center;top:692.89px;font-size:12.3px;color:#62686f;">09:00</div>
<div class="t" style="left:816.41px;width:60px;text-align:center;top:692.89px;font-size:12.3px;color:#62686f;">10:00</div>
<div class="t" style="left:908.84px;width:60px;text-align:center;top:692.89px;font-size:12.3px;color:#62686f;">11:00</div>
<div class="t" style="left:1001.28px;width:60px;text-align:center;top:692.89px;font-size:12.3px;color:#62686f;">12:00</div>
<div class="t" style="left:1093.72px;width:60px;text-align:center;top:692.89px;font-size:12.3px;color:#62686f;">13:00</div>
<div class="t" style="left:1186.16px;width:60px;text-align:center;top:692.89px;font-size:12.3px;color:#62686f;">14:00</div>
<div class="t" style="left:1278.59px;width:60px;text-align:center;top:692.89px;font-size:12.3px;color:#62686f;">15:00</div>
<div class="t" style="left:1371.03px;width:60px;text-align:center;top:692.89px;font-size:12.3px;color:#62686f;">16:00</div>
<div class="t" style="left:1463.47px;width:60px;text-align:center;top:692.89px;font-size:12.3px;color:#62686f;">17:00</div>
<div class="t" style="left:1555.91px;width:60px;text-align:center;top:692.89px;font-size:12.3px;color:#62686f;">18:00</div>
<div class="t" style="left:1648.34px;width:60px;text-align:center;top:692.89px;font-size:12.3px;color:#62686f;">19:00</div>
<div class="t" style="left:1740.78px;width:60px;text-align:center;top:692.89px;font-size:12.3px;color:#62686f;">20:00</div>
<div style="position:absolute;left:286px;top:743px;width:1593px;height:200px;background:#fff;border-radius:15px;box-shadow:0 1px 2px rgba(20,40,50,0.03),0 4px 14px rgba(20,40,50,0.045);"></div>
<div class="t" style="left:308.80px;top:759.10px;font-size:11.7px;font-weight:700;color:#8a979d;">Heure</div>
<div class="t" style="left:408.60px;top:759.10px;font-size:11.7px;font-weight:700;color:#8a979d;">Enfants</div>
<div class="t" style="left:647.30px;top:759.10px;font-size:11.7px;font-weight:700;color:#8a979d;">Professionnels</div>
<div class="t" style="left:885.90px;top:759.10px;font-size:11.7px;font-weight:700;color:#8a979d;">Réel / planning</div>
<div class="t" style="left:1148.90px;top:759.10px;font-size:11.7px;font-weight:700;color:#8a979d;">Minimum calculé</div>
<div class="t" style="left:1387.60px;top:759.10px;font-size:11.7px;font-weight:700;color:#8a979d;">Ratio observé</div>
<div class="t" style="left:1626.90px;top:759.10px;font-size:11.7px;font-weight:700;color:#8a979d;">Situation</div>
<div class="t" style="left:1738.60px;top:759.10px;font-size:11.7px;font-weight:700;color:#8a979d;">Écart au minimum</div>
<div style="position:absolute;left:298.3px;top:785px;width:1568.3px;height:32px;box-sizing:border-box;border:1px solid #e8edef;background:#fff;border-radius:10px;"></div>
<div class="t" style="left:309.20px;top:794.84px;font-size:12px;font-weight:700;color:#0f151e;">05:00</div>
<div class="t" style="left:408.90px;top:794.84px;font-size:12px;font-weight:400;color:#0f151e;">0 enf.</div>
<div class="t" style="left:647.60px;top:794.84px;font-size:12px;font-weight:400;color:#0f151e;">0 pro.</div>
<div class="t" style="left:886.20px;top:794.84px;font-size:12px;font-weight:700;color:#3a4656;">0 / 0</div>
<div class="t" style="left:1148.60px;top:794.84px;font-size:12px;font-weight:400;color:#0f151e;">0</div>
<div class="t" style="left:1387.00px;top:794.84px;font-size:12px;font-weight:400;color:#0f151e;">0 pour 0</div>
<div style="position:absolute;left:1718px;top:799.7px;width:12px;height:1.2px;background:#8a949c;"></div>
<div class="t" style="right:51.80px;top:794.84px;font-size:12px;font-weight:700;color:#0f151e;">0 pro.</div>
<div style="position:absolute;left:298.3px;top:823px;width:1568.3px;height:32px;box-sizing:border-box;border:1px solid #e8edef;background:#fff;border-radius:10px;"></div>
<div class="t" style="left:309.20px;top:832.84px;font-size:12px;font-weight:700;color:#0f151e;">06:00</div>
<div class="t" style="left:408.90px;top:832.84px;font-size:12px;font-weight:400;color:#0f151e;">0 enf.</div>
<div class="t" style="left:647.60px;top:832.84px;font-size:12px;font-weight:400;color:#0f151e;">0 pro.</div>
<div class="t" style="left:886.20px;top:832.84px;font-size:12px;font-weight:700;color:#3a4656;">0 / 0</div>
<div class="t" style="left:1148.60px;top:832.84px;font-size:12px;font-weight:400;color:#0f151e;">0</div>
<div class="t" style="left:1387.00px;top:832.84px;font-size:12px;font-weight:400;color:#0f151e;">0 pour 0</div>
<div style="position:absolute;left:1718px;top:837.7px;width:12px;height:1.2px;background:#8a949c;"></div>
<div class="t" style="right:51.80px;top:832.84px;font-size:12px;font-weight:700;color:#0f151e;">0 pro.</div>
<div style="position:absolute;left:298.3px;top:861px;width:1568.3px;height:32px;box-sizing:border-box;border:1px solid #f1d49c;background:#fffaf1;border-radius:10px;"></div>
<div class="t" style="left:309.20px;top:870.84px;font-size:12px;font-weight:700;color:#0f151e;">07:00</div>
<div class="t" style="left:408.90px;top:870.84px;font-size:12px;font-weight:400;color:#0f151e;">3 enf.</div>
<div class="t" style="left:647.60px;top:870.84px;font-size:12px;font-weight:400;color:#0f151e;">0 pro.</div>
<div class="t" style="left:886.20px;top:870.84px;font-size:12px;font-weight:700;color:#3a4656;">0 / 1</div>
<div class="t" style="left:1148.60px;top:870.84px;font-size:12px;font-weight:400;color:#0f151e;">1</div>
<div class="t" style="left:1387.00px;top:870.84px;font-size:12px;font-weight:400;color:#0f151e;">3 pour 0</div>
<div class="t" style="right:177.00px;top:870.84px;font-size:12px;font-weight:700;color:#a5740f;">À vérifier</div>
<div class="t" style="right:51.80px;top:870.84px;font-size:12px;font-weight:700;color:#0f151e;">-1 pro.</div>
<div style="position:absolute;left:298.3px;top:899px;width:1568.3px;height:32px;box-sizing:border-box;border:1px solid #e8edef;background:#fff;border-radius:10px;"></div>
<div class="t" style="left:309.20px;top:908.84px;font-size:12px;font-weight:700;color:#0f151e;">08:00</div>
<div class="t" style="left:408.90px;top:908.84px;font-size:12px;font-weight:400;color:#0f151e;">4 enf.</div>
<div class="t" style="left:647.60px;top:908.84px;font-size:12px;font-weight:400;color:#0f151e;">1 pro.</div>
<div class="t" style="left:886.20px;top:908.84px;font-size:12px;font-weight:700;color:#3a4656;">1 / 2</div>
<div class="t" style="left:1148.60px;top:908.84px;font-size:12px;font-weight:400;color:#0f151e;">1</div>
<div class="t" style="left:1387.00px;top:908.84px;font-size:12px;font-weight:400;color:#0f151e;">4 pour 1</div>
<div style="position:absolute;left:1718px;top:913.7px;width:12px;height:1.2px;background:#8a949c;"></div>
<div class="t" style="right:51.80px;top:908.84px;font-size:12px;font-weight:700;color:#0f151e;">0 pro.</div>
</body></html>
